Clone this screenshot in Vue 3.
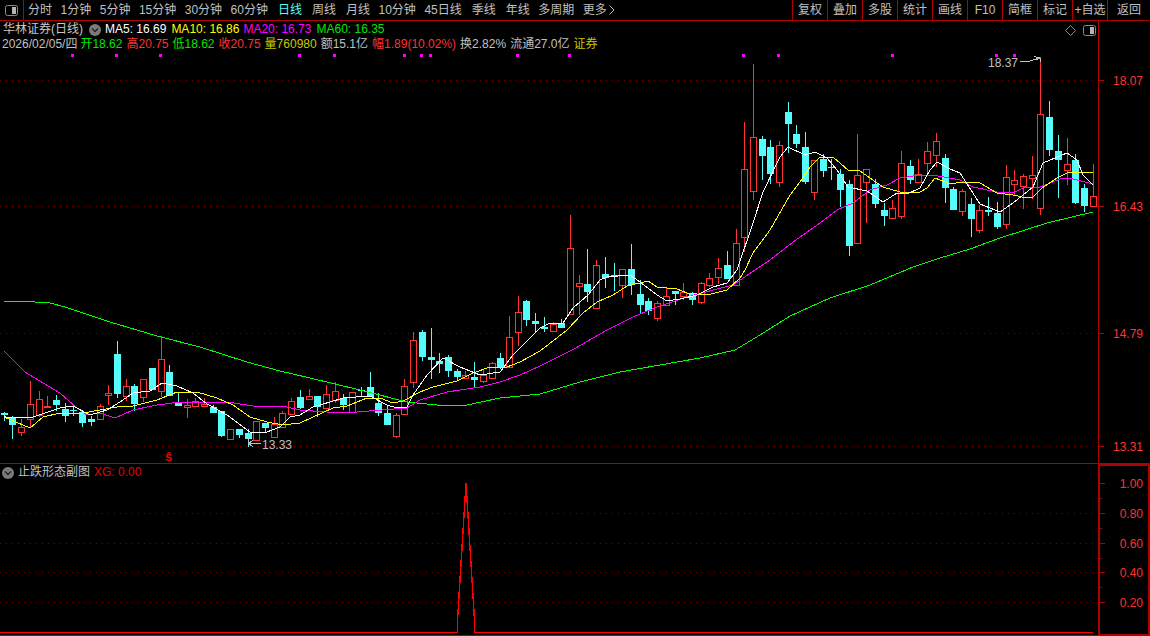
<script setup>
const tabs = [
  { t: '分时' }, { t: '1分钟' }, { t: '5分钟' }, { t: '15分钟' }, { t: '30分钟' }, { t: '60分钟', w: 1 },
  { t: '日线', on: 1, w: 1 }, { t: '周线', w: 1 }, { t: '月线' }, { t: '10分钟' }, { t: '45日线', w: 1 },
  { t: '季线', w: 1 }, { t: '年线' }, { t: '多周期' }, { t: '更多' }
]
const tools = ['复权', '叠加', '多股', '统计', '画线', 'F10', '简框', '标记', '+自选', '返回']
const mas = [
  { t: 'MA5: 16.69', c: 'white' }, { t: 'MA10: 16.86', c: 'yellow' },
  { t: 'MA20: 16.73', c: 'magenta' }, { t: 'MA60: 16.35', c: 'green' }
]
const quote = [
  { l: '开', v: '18.62', lc: 'green', vc: 'green' },
  { l: '高', v: '20.75', lc: 'red', vc: 'red' },
  { l: '低', v: '18.62', lc: 'green', vc: 'green' },
  { l: '收', v: '20.75', lc: 'red', vc: 'red' },
  { l: '量', v: '760980', lc: 'olive', vc: 'olive' },
  { l: '额', v: '15.1亿', lc: 'grey', vc: 'grey' },
  { l: '幅', v: '1.89(10.02%)', lc: 'red', vc: 'red' },
  { l: '换', v: '2.82%', lc: 'grey', vc: 'grey' },
  { l: '流通', v: '27.0亿', lc: 'grey', vc: 'grey' }
]
// type (0 = cyan falling, 1 = red rising), high, body top, body bottom, low
const raw = [
  [0,412,413,415,421],[0,416,417,425,439],[1,419,427,432,436],[1,381,404,419,427],[1,391,399,415,417],
  [1,396,406,407,407],[0,395,400,405,411],[0,403,409,416,422],[0,406,410,411,416],[0,410,412,423,427],
  [0,416,419,422,426],[1,404,406,419,419],[1,385,393,395,405],[0,341,354,394,398],[1,379,386,396,401],
  [0,384,386,404,411],[1,379,379,397,402],[0,368,368,390,390],[1,336,359,391,397],[0,365,372,396,396],
  [0,393,402,406,406],[1,399,405,407,418],[1,398,401,406,407],[1,398,404,406,406],[0,405,407,413,413],
  [0,411,411,436,437],[1,429,429,439,439],[0,429,429,435,438],[0,429,433,439,447],[1,421,421,440,440],
  [0,423,423,428,432],[1,417,424,437,437],[1,411,413,427,427],[1,398,401,414,414],[0,390,397,408,409],
  [1,389,396,399,399],[0,396,396,407,417],[1,385,394,408,408],[1,382,391,400,403],[0,394,398,405,410],
  [1,392,392,412,413],[0,387,390,391,397],[0,372,387,397,397],[0,393,403,413,416],[0,406,413,425,425],
  [1,413,415,436,438],[1,379,386,414,414],[1,332,340,382,388],[0,330,332,357,361],[0,328,357,360,379],
  [0,353,361,364,373],[0,355,357,371,377],[0,369,371,377,381],[1,371,375,378,379],[0,362,377,380,387],
  [1,369,375,381,383],[1,362,363,378,378],[0,353,358,367,369],[1,316,337,367,367],[1,296,312,332,346],
  [0,300,301,320,326],[0,313,321,324,332],[0,317,327,329,332],[1,322,324,331,331],[0,319,323,328,328],
  [1,215,248,314,314],[1,275,283,286,315],[0,249,284,292,302],[1,260,265,308,308],[0,257,274,278,288],
  [0,263,275,277,291],[1,269,269,285,298],[0,244,269,285,295],[0,280,294,305,313],[0,298,301,311,315],
  [1,301,303,318,321],[1,288,296,305,305],[0,291,291,294,305],[1,283,292,296,300],[0,292,293,300,305],
  [1,282,283,302,304],[1,273,278,285,287],[1,258,268,277,284],[0,251,265,279,279],[1,229,243,285,285],
  [1,122,169,237,252],[1,64,137,191,200],[0,136,139,156,180],[0,140,147,174,184],[1,141,145,182,187],
  [0,102,112,124,153],[0,125,134,144,148],[0,132,147,182,184],[1,160,160,192,200],[0,154,159,171,177],
  [0,159,167,168,180],[0,169,174,190,207],[0,180,184,246,256],[1,134,175,243,243],[1,169,169,182,223],
  [0,179,184,204,208],[0,203,210,216,226],[1,200,208,218,219],[1,151,163,216,219],[0,160,166,180,184],
  [1,159,174,182,182],[1,142,151,163,173],[1,133,141,155,167],[0,154,158,188,203],[0,187,189,210,210],
  [1,189,191,211,216],[0,198,204,219,237],[1,205,210,230,233],[0,197,210,212,216],[0,202,213,227,229],
  [1,165,177,224,229],[1,170,180,184,195],[1,174,176,186,209],[1,156,175,178,199],[1,57,114,208,215],
  [0,101,117,150,156],[0,135,151,160,198],[1,138,164,170,185],[0,154,160,203,204],[0,184,188,206,212],
  [1,164,196,206,206]
]
const candles = raw.map((r, i) => ({
  x: Math.floor(4.2 + 8.712 * i), up: r[0] === 1, h: r[1], t: r[2], b: r[3], l: r[4]
}))

const ma5 = '4,416 7,418 33,417 60,408 73,406 90,415 107,410 120,402 133,393 150,391 162,383 177,386 193,393 207,404 227,415 250,432 267,432 280,427 290,417 300,415 313,407 330,402 343,398 370,396 387,405 397,408 407,407 413,395 427,375 443,358 460,367 480,375 500,372 513,355 540,328 550,323 563,323 573,308 588,295 600,280 607,277 630,275 640,282 657,295 667,301 680,299 697,295 713,287 727,283 737,270 753,223 763,192 780,157 788,147 805,155 815,152 827,158 837,170 848,187 867,191 883,202 897,193 907,194 920,188 930,170 937,162 950,169 960,173 980,204 1000,212 1013,203 1033,187 1043,163 1067,153 1077,160 1083,175 1093,185'
const ma10 = '4,417 30,428 43,417 60,413 83,413 100,410 117,407 133,406 157,400 177,392 197,392 217,398 233,405 250,417 267,422 283,425 300,423 313,417 333,408 347,406 367,398 380,398 393,403 403,401 420,392 433,387 457,381 473,373 490,367 507,367 520,362 540,351 567,330 583,313 597,302 613,295 627,286 648,281 657,287 677,289 687,293 707,295 727,290 740,278 745,270 753,253 770,230 790,195 800,182 810,167 820,157 833,157 848,170 860,171 870,178 883,187 900,192 920,192 927,188 935,178 950,184 963,182 980,183 997,193 1013,195 1027,198 1033,197 1042,188 1057,178 1067,173 1083,172 1093,173'
const ma20 = '4,351 13,360 25,372 43,383 60,393 77,408 87,415 100,413 115,418 133,410 157,405 180,402 227,402 253,406 287,407 300,410 340,413 357,412 407,408 420,400 447,392 480,387 500,382 520,375 540,366 574,349 607,330 633,317 657,307 687,297 717,289 733,285 755,270 770,260 793,242 820,223 837,210 853,203 870,190 887,185 900,178 920,175 933,175 960,180 973,187 997,192 1013,193 1023,188 1040,187 1063,178 1073,179 1093,184'
const ma60 = '4,302 20,301 50,303 65,307 80,312 110,322 157,336 200,347 247,362 280,371 310,378 360,390 407,402 437,405 467,405 500,398 540,394 580,382 620,372 660,365 700,358 735,350 760,335 790,316 830,298 870,285 913,267 940,258 970,249 1000,238 1047,223 1093,212'

const marks = [72, 116, 160, 299, 334, 404, 421, 430, 517, 569, 743, 778, 892, 996, 1014]
const mainGrid = [80, 206, 333, 446]
const mainAxis = [
  { y: 80, t: '18.07' }, { y: 206, t: '16.43' }, { y: 333, t: '14.79' }, { y: 446, t: '13.31' }
]
const subGrid = [513, 543, 572, 602]
const subAxis = [
  { y: 483, t: '1.00' }, { y: 513, t: '0.80' }, { y: 543, t: '0.60' }, { y: 572, t: '0.40' }, { y: 602, t: '0.20' }
]
const subMinor = [498, 528, 558, 587]
</script>

<template>
  <div class="screen">
    <header class="toolbar">
      <div class="side-cell">
        <svg class="pane-icon" viewBox="0 0 13 11"><rect x="0.5" y="0.5" width="12" height="10" rx="2" fill="none" stroke="#8a8a8a" /><rect x="7" y="2" width="4" height="7" fill="#b4b4b4" /></svg>
      </div>
      <nav class="tabs">
        <span v-for="tab in tabs" :key="tab.t" class="tab" :class="{ active: tab.on, wide: tab.w }">{{ tab.t }}</span>
        <svg class="more-arrow" viewBox="0 0 6 10"><path d="M0.500 0.500L5 5L0.500 9.500" fill="none" stroke="#c0c0c0" /></svg>
      </nav>
      <div class="tools">
        <span v-for="tool in tools" :key="tool" class="tool">{{ tool }}</span>
      </div>
    </header>

    <section class="main-panel">
      <div class="plot">
        <svg class="chart" width="1098" height="442" viewBox="0 21 1098 442">
          <line v-for="y in mainGrid" :key="y" x1="0" x2="1098" :y1="y + 0.5" :y2="y + 0.5" class="dots" />
          <rect v-for="x in marks" :key="x" :x="x - 1" y="54" width="3" height="3" fill="#ff00ff" />
          <g v-for="(c, i) in candles" :key="i" shape-rendering="crispEdges">
            <rect :x="c.x" :y="c.h" width="1" :height="c.l - c.h" :fill="c.up ? '#ff3232' : '#54fcfc'" />
            <rect v-if="c.up" :x="c.x - 2.5" :y="c.t + 0.5" width="6" :height="c.b - c.t" fill="#000" stroke="#ff3232" />
            <rect v-else :x="c.x - 3" :y="c.t" width="7" :height="Math.max(c.b - c.t, 1)" fill="#54fcfc" />
          </g>
          <polyline :points="ma60" class="ma" stroke="#00ff00" />
          <polyline :points="ma20" class="ma" stroke="#ff00ff" />
          <polyline :points="ma10" class="ma" stroke="#ffff00" />
          <polyline :points="ma5" class="ma" stroke="#ffffff" />
          <text x="988" y="67" class="note">18.37</text>
          <path d="M1020 62L1026 61H1030L1039 58M1034 56.500L1040 58L1035 60M1040.500 58V62" class="note-line" />
          <text x="262" y="449" class="note">13.33</text>
          <path d="M261 443.500H249M253 440L248.500 443.500L253 447M248.500 443.500V437" class="note-line" />
        </svg>
        <span class="sell">ŝ</span>
        <div class="legend">
          <div class="legend-row">
            <span class="title">华林证券(日线)</span>
            <svg class="fold fold-top" viewBox="0 0 12 12"><circle cx="6" cy="6" r="6" fill="#7a7a7a" /><path d="M3 4.500L6 7.500L9 4.500" fill="none" stroke="#222" stroke-width="1.300" /></svg>
            <span v-for="m in mas" :key="m.t" class="ma-label" :class="m.c">{{ m.t }}</span>
          </div>
          <div class="legend-row quote">
            <span class="grey date">2026/02/05/四</span>
            <span v-for="q in quote" :key="q.l" class="q-item">
              <span :class="q.lc">{{ q.l }}</span><span :class="q.vc">{{ q.v }}</span>
            </span>
            <span class="olive">证券</span>
          </div>
        </div>
        <svg class="diamond" viewBox="0 0 11 11"><path d="M5.500 0.500L10.500 5.500L5.500 10.500L0.500 5.500Z" fill="none" stroke="#8a8a8a" /></svg>
        <svg class="pane-icon pane-icon-chart" viewBox="0 0 13 11"><rect x="0.5" y="0.5" width="12" height="10" rx="2" fill="none" stroke="#8a8a8a" /><rect x="7" y="2" width="4" height="7" fill="#b4b4b4" /></svg>
      </div>
      <svg class="axis" width="52" height="442" viewBox="1098 21 52 442">
        <line x1="1098.500" x2="1098.500" y1="21" y2="463" class="axis-line" />
        <g v-for="a in mainAxis" :key="a.t">
          <line x1="1099" x2="1104" :y1="a.y + 0.5" :y2="a.y + 0.5" class="axis-line" />
          <text x="1143" :y="a.y + 5" class="price" text-anchor="end">{{ a.t }}</text>
        </g>
      </svg>
    </section>

    <section class="sub-panel">
      <div class="plot">
        <svg class="chart" width="1098" height="171" viewBox="0 464 1098 171">
          <line v-for="y in subGrid" :key="y" x1="0" x2="1098" :y1="y + 0.5" :y2="y + 0.5" class="dots" />
          <polyline points="0,632.500 457.500,632.500 457.500,620 466,483 474.500,620 474.500,632.500 1093,632.500" class="signal" />
        </svg>
        <div class="sub-legend">
          <svg class="fold" viewBox="0 0 12 12"><circle cx="6" cy="6" r="6" fill="#7a7a7a" /><path d="M3 4.500L6 7.500L9 4.500" fill="none" stroke="#222" stroke-width="1.300" /></svg>
          <span class="grey">止跌形态副图</span>
          <span class="pure-red">XG: 0.00</span>
        </div>
      </div>
      <svg class="axis sub-axis" width="52" height="172" viewBox="1098 464 52 172">
        <rect x="1099" y="465" width="50" height="170" class="axis-frame" />
        <g v-for="a in subAxis" :key="a.t">
          <line x1="1100" x2="1105" :y1="a.y + 0.5" :y2="a.y + 0.5" class="axis-line" />
          <text x="1143" :y="a.y + 5" class="price" text-anchor="end">{{ a.t }}</text>
        </g>
        <line v-for="y in subMinor" :key="y" x1="1100" x2="1102" :y1="y + 0.5" :y2="y + 0.5" class="axis-line" />
      </svg>
    </section>
  </div>
</template>

<style>
html, body { margin: 0; background: #000; overflow: hidden; }
</style>

<style scoped>
.screen {
  width: 1150px;
  height: 636px;
  background: #000;
  color: #c0c0c0;
  font: 12px/15px "Liberation Sans", "Noto Sans CJK SC", sans-serif;
  display: flex;
  flex-direction: column;
  overflow: hidden;
}
.toolbar {
  height: 20px;
  flex: none;
  display: flex;
  align-items: stretch;
  border-bottom: 1px solid #b00000;
}
.side-cell {
  width: 18px;
  flex: none;
  border-right: 1px solid #b00000;
  display: flex;
  align-items: center;
  padding-left: 5px;
}
.pane-icon { width: 13px; height: 11px; display: block; }
.tabs {
  flex: 1;
  display: flex;
  align-items: center;
  gap: 8.500px;
  padding-left: 4px;
  white-space: nowrap;
  line-height: 20px;
}
.tab.wide { margin-right: 1.500px; }
.tab.active { color: #54fcfc; }
.more-arrow { width: 6px; height: 10px; margin-left: -6px; }
.tools { display: flex; flex: none; }
.tool {
  width: 34px;
  border-left: 1px solid #b00000;
  text-align: center;
  line-height: 20px;
  white-space: nowrap;
}
.tool:last-child { width: 42px; }
.main-panel {
  height: 442px;
  flex: none;
  display: flex;
  border-bottom: 1px solid #b00000;
}
.plot { position: relative; width: 1098px; flex: none; }
.chart, .axis { display: block; flex: none; }
.dots { stroke: #800000; stroke-width: 1; stroke-dasharray: 1 5; }
.ma { fill: none; stroke-width: 1; shape-rendering: crispEdges; }
.signal { fill: none; stroke: #ff0000; stroke-width: 1.400; shape-rendering: crispEdges; }
.note { fill: #c0c0c0; font-size: 12px; }
.note-line { fill: none; stroke: #c0c0c0; stroke-width: 1; shape-rendering: crispEdges; }
.sell {
  position: absolute;
  left: 165px;
  top: 430px;
  color: #f00000;
  font-size: 13px;
  font-weight: 700;
  line-height: 12px;
}
.axis-line { stroke: #b00000; stroke-width: 1; shape-rendering: crispEdges; }
.axis-frame { fill: none; stroke: #b00000; stroke-width: 2; shape-rendering: crispEdges; }
.price { fill: #ff3232; font-size: 12px; }
.legend {
  position: absolute;
  left: 3px;
  top: 1px;
  white-space: nowrap;
}
.legend-row { display: flex; align-items: center; height: 15px; }
.quote { margin-left: -1px; gap: 4px; }
.title { color: #c8c8c8; }
.fold { width: 12px; height: 12px; flex: none; display: block; }
.fold-top { margin: 0 4px 0 6px; }
.ma-label { margin-right: 5px; }
.ma-label.yellow { margin-right: 4px; }
.q-item { display: inline-flex; }
.date { margin-right: -1px; }
.white { color: #fff; }
.yellow { color: #ffff00; }
.magenta { color: #ff00ff; }
.green { color: #00e600; }
.red { color: #ff3232; }
.olive { color: #c8c800; }
.grey { color: #c0c0c0; }
.pure-red { color: #e60000; }
.diamond { position: absolute; left: 1065px; top: 4px; width: 11px; height: 11px; }
.pane-icon-chart { position: absolute; left: 1083px; top: 4px; }
.sub-panel { height: 172px; flex: none; display: flex; }
.sub-legend {
  position: absolute;
  left: 2px;
  top: 1px;
  display: flex;
  align-items: center;
  height: 15px;
  gap: 4px;
  white-space: nowrap;
}
.sub-panel .plot { border-bottom: 1px solid #b00000; height: 171px; }
</style>
